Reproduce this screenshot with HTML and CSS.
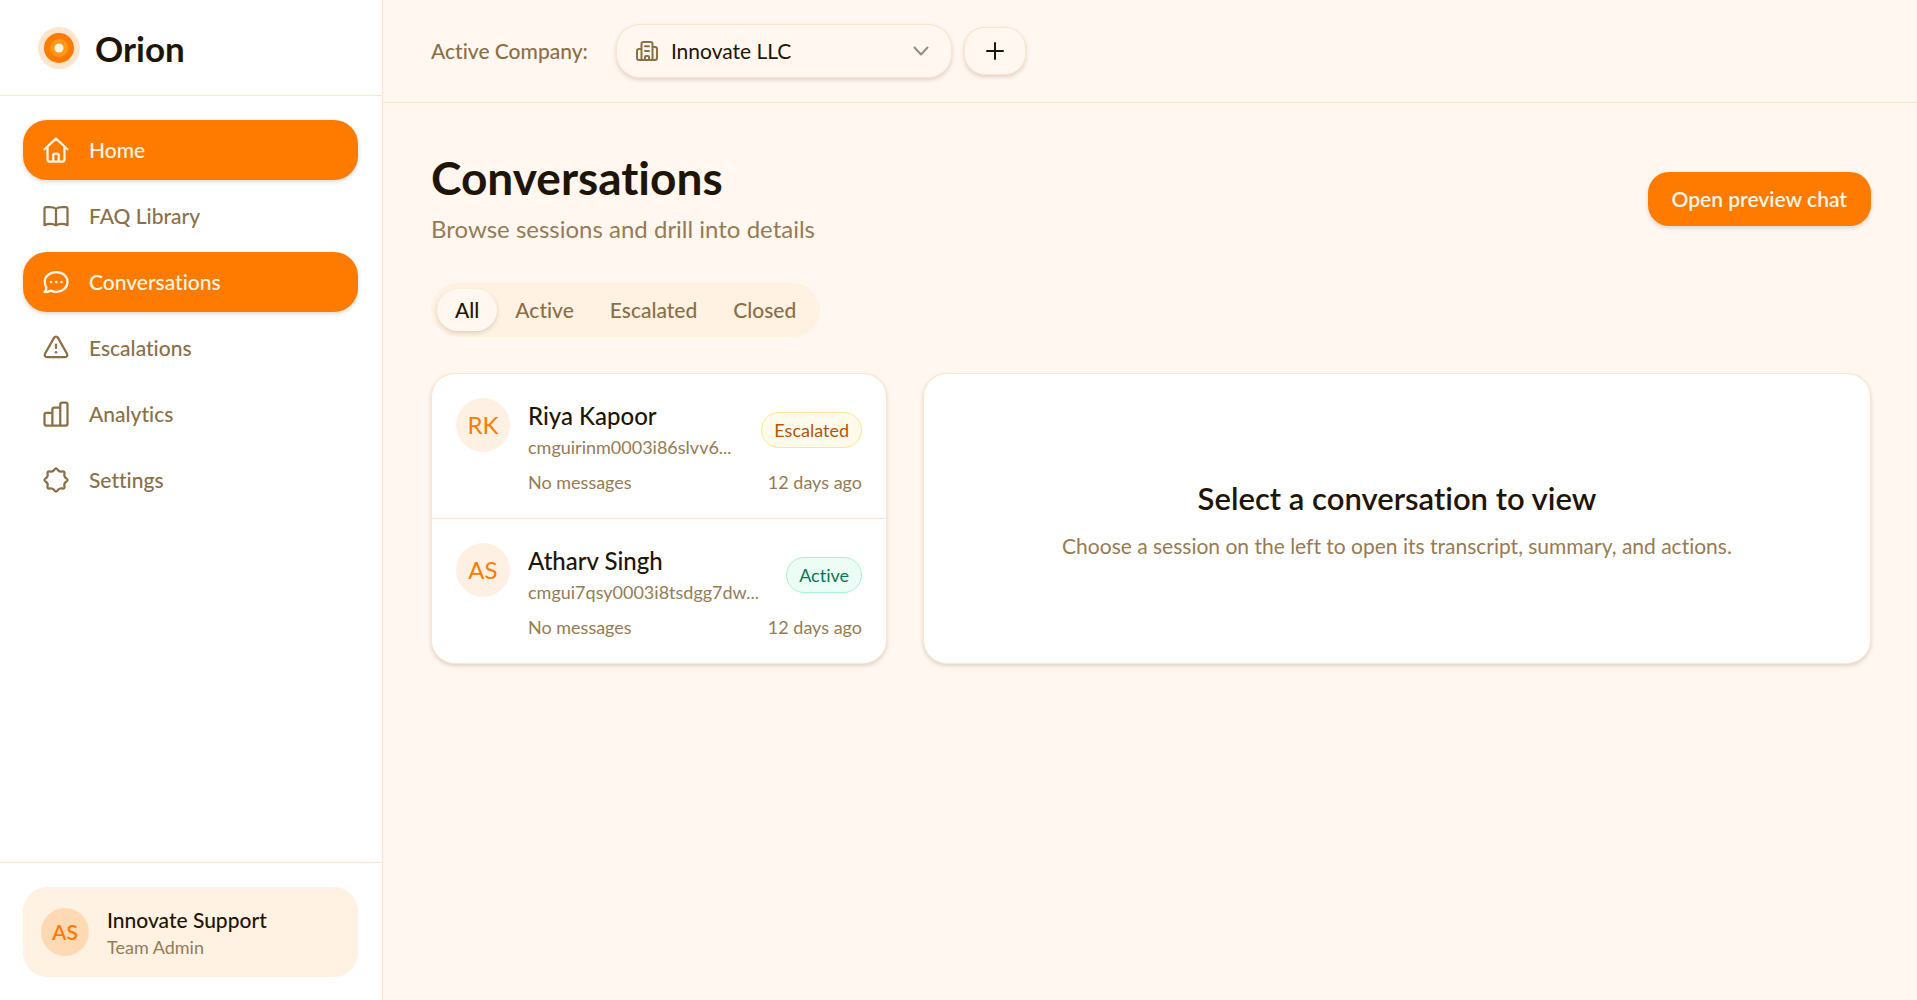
FILE: index.html
```html
<!DOCTYPE html>
<html lang="en">
<head>
<meta charset="utf-8">
<meta name="viewport" content="width=device-width, initial-scale=1">
<title>Orion – Conversations</title>
<link rel="stylesheet" href="styles.css">
</head>
<body>
<div class="app">
  <aside class="sidebar">
    <div class="brand">
      <svg class="brand-mark" viewBox="0 0 48 48" aria-hidden="true">
        <circle cx="24" cy="24" r="21" fill="#ffe5cc"/>
        <circle cx="24" cy="24" r="15" fill="#ff7b00"/>
        <circle cx="24" cy="24" r="9" fill="#ff9a17"/>
        <circle cx="24" cy="24" r="4.5" fill="#fff2e0"/>
      </svg>
      <span class="brand-name">Orion</span>
    </div>
    <nav class="nav" aria-label="Main">
      <a class="nav-link is-active" href="#home">
        <svg class="icon" viewBox="0 0 24 24" aria-hidden="true"><path d="M2.8 11.4 12 2.9l9.200 8.500M5.200 9.300V19.800A1.400 1.400 0 0 0 6.600 21.200H17.400A1.400 1.400 0 0 0 18.800 19.800V9.300M9.800 21V16A1.200 1.200 0 0 1 11 14.800H13A1.200 1.200 0 0 1 14.200 16V21"/></svg>
        Home
      </a>
      <a class="nav-link" href="#faq">
        <svg class="icon" viewBox="0 0 24 24" aria-hidden="true"><path d="M12 6.200C10.500 4.900 8.800 4.800 7 4.800H4.200A1.400 1.400 0 0 0 2.800 6.200V19.300C5.500 18.200 9.500 18.100 12 19.400 14.500 18.100 18.500 18.200 21.200 19.300V6.200A1.400 1.400 0 0 0 19.800 4.800H17C15.200 4.800 13.500 4.900 12 6.200ZM12 6.200V19.400"/></svg>
        FAQ Library
      </a>
      <a class="nav-link is-active" href="#conversations" aria-current="page">
        <svg class="icon" viewBox="0 0 24 24" aria-hidden="true"><path d="M12.200 4C7 4 3 7.400 3 11.900C3 13.600 3.500 15.100 4.300 16.300C4.500 17.700 3.900 18.900 2.800 20C4.700 20.100 6.400 19.600 7.800 18.900C9.100 19.500 10.600 19.800 12.200 19.800C17.400 19.800 21.200 16.400 21.200 11.900S17.400 4 12.200 4Z"/><path class="dots" d="M8 11.900h.01M12.200 11.900h.01M16.400 11.900h.01"/></svg>
        Conversations
      </a>
      <a class="nav-link" href="#escalations">
        <svg class="icon" viewBox="0 0 24 24" aria-hidden="true"><path d="M10.500 3.700 3.200 16.600C2.500 17.800 3.300 19.300 4.700 19.300H19.300C20.700 19.300 21.500 17.800 20.800 16.600L13.500 3.700C12.800 2.600 11.200 2.600 10.500 3.700ZM12 9.200V12"/><path class="dots" d="M12 15.400h.01"/></svg>
        Escalations
      </a>
      <a class="nav-link" href="#analytics">
        <svg class="icon" viewBox="0 0 24 24" aria-hidden="true"><path d="M9.100 21.200H4.300A1.500 1.500 0 0 1 2.800 19.700V12.600A1.500 1.500 0 0 1 4.300 11.100H9.100ZM9.100 21.200H15.400V6.900H10.600A1.500 1.500 0 0 0 9.100 8.400ZM15.400 21.200H19.700A1.500 1.500 0 0 0 21.200 19.700V4.300A1.500 1.500 0 0 0 19.700 2.800H16.900A1.500 1.500 0 0 0 15.400 4.300Z"/></svg>
        Analytics
      </a>
      <a class="nav-link" href="#settings">
        <svg class="icon" viewBox="0 0 24 24" aria-hidden="true"><path d="M10.720 3.760Q12 1.700 13.280 3.760T16.920 5.270Q19.280 4.720 18.730 7.080T20.240 10.720Q22.300 12 20.240 13.280T18.730 16.920Q19.280 19.280 16.920 18.730T13.280 20.240Q12 22.300 10.720 20.240T7.080 18.730Q4.720 19.280 5.270 16.920T3.760 13.280Q1.700 12 3.760 10.720T5.270 7.080Q4.720 4.720 7.080 5.270T10.720 3.760Z"/></svg>
        Settings
      </a>
    </nav>
    <div class="account">
      <div class="account-card">
        <span class="account-avatar" aria-hidden="true">AS</span>
        <div>
          <div class="account-name">Innovate Support</div>
          <div class="account-role">Team Admin</div>
        </div>
      </div>
    </div>
  </aside>

  <div class="page">
    <header class="topbar">
      <label class="topbar-label" for="company">Active Company:</label>
      <div class="topbar-controls">
        <div class="company">
          <svg class="company-icon" viewBox="0 0 24 24" aria-hidden="true"><path d="M6.500 21V5A2 2 0 0 1 8.500 3H15.500A2 2 0 0 1 17.500 5V21M6.500 10H4A2 2 0 0 0 2 12V19A2 2 0 0 0 4 21H20A2 2 0 0 0 22 19V10A2 2 0 0 0 20 8H17.500M10 7.200H14M10 12H14M10 21V18A1 1 0 0 1 11 17H13A1 1 0 0 1 14 18V21"/></svg>
          <select class="company-select" id="company"><option>Innovate LLC</option></select>
          <svg class="company-chevron" viewBox="0 0 24 24" aria-hidden="true"><path d="M5.500 8.500 12 15.500 18.500 8.500"/></svg>
        </div>
        <button class="add" type="button" aria-label="Add company">
          <svg class="add-icon" viewBox="0 0 24 24" aria-hidden="true"><path d="M12 4V20M4 12H20"/></svg>
        </button>
      </div>
    </header>

    <main class="main">
      <div class="heading">
        <div class="heading-text">
          <h1 class="title">Conversations</h1>
          <p class="subtitle">Browse sessions and drill into details</p>
        </div>
        <button class="primary" type="button">Open preview chat</button>
      </div>

      <div class="tabs" role="tablist" aria-label="Status">
        <button class="tab is-selected" type="button" role="tab" aria-selected="true">All</button>
        <button class="tab" type="button" role="tab" aria-selected="false">Active</button>
        <button class="tab" type="button" role="tab" aria-selected="false">Escalated</button>
        <button class="tab" type="button" role="tab" aria-selected="false">Closed</button>
      </div>

      <div class="columns">
        <ul class="card sessions">
          <li class="session">
            <span class="session-avatar" aria-hidden="true">RK</span>
            <div class="session-body">
              <div class="session-head">
                <div class="session-who">
                  <div class="session-name">Riya Kapoor</div>
                  <div class="session-id">cmguirinm0003i86slvv6...</div>
                </div>
                <span class="badge badge-escalated">Escalated</span>
              </div>
              <div class="session-meta"><span>No messages</span><span>12 days ago</span></div>
            </div>
          </li>
          <li class="session">
            <span class="session-avatar" aria-hidden="true">AS</span>
            <div class="session-body">
              <div class="session-head">
                <div class="session-who">
                  <div class="session-name">Atharv Singh</div>
                  <div class="session-id">cmgui7qsy0003i8tsdgg7dw...</div>
                </div>
                <span class="badge badge-active">Active</span>
              </div>
              <div class="session-meta"><span>No messages</span><span>12 days ago</span></div>
            </div>
          </li>
        </ul>
        <section class="card empty">
          <h2 class="empty-title">Select a conversation to view</h2>
          <p class="empty-text">Choose a session on the left to open its transcript, summary, and actions.</p>
        </section>
      </div>
    </main>
  </div>
</div>
</body>
</html>
```
FILE: styles.css
```css
:root {
  --bg: #fff7f0;
  --surface: #ffffff;
  --soft: #fff2e2;
  --line: #ffe4cc;
  --text: #1e1507;
  --muted: #8b6f47;
  --muted-light: #967b55;
  --primary: #ff7b00;
  --on-primary: #fff5e6;
  --shadow: 0 2px 4px rgba(60, 30, 0, 0.16);
}

*, *::before, *::after { box-sizing: border-box; }

body {
  margin: 0;
  background: var(--bg);
  color: var(--text);
  font: 400 21px/30px "Lato", "Liberation Sans", sans-serif;
  font-variant-ligatures: none;
}

h1, h2, p, ul { margin: 0; padding: 0; }
ul { list-style: none; }
button, select {
  font: inherit;
  font-variant-ligatures: none;
  color: inherit;
  cursor: pointer;
}

svg {
  flex: none;
  fill: none;
  stroke: currentColor;
  stroke-width: 1.8;
  stroke-linecap: round;
  stroke-linejoin: round;
}
.dots { stroke-width: 2; }

.app { display: flex; min-height: 100vh; }

/* Sidebar */
.sidebar {
  display: flex;
  flex-direction: column;
  flex: none;
  width: 383px;
  background: var(--surface);
  border-right: 1px solid var(--line);
}
.brand {
  display: flex;
  align-items: center;
  gap: 12px;
  padding: 24px 24px 23px 35px;
  border-bottom: 1px solid var(--line);
}
.brand-mark { width: 48px; height: 48px; stroke: none; }
.brand-name { font-size: 35px; line-height: 48px; font-weight: 700; }

.nav {
  display: flex;
  flex-direction: column;
  flex: 1;
  gap: 6px;
  padding: 24px 24px 24px 23px;
}
.nav-link {
  display: flex;
  align-items: center;
  gap: 18px;
  padding: 15px 18px;
  border-radius: 24px;
  color: var(--muted);
  font-weight: 500;
  text-decoration: none;
}
.nav-link.is-active {
  background: var(--primary);
  color: var(--on-primary);
  box-shadow: var(--shadow);
}
.icon { width: 30px; height: 30px; }

.account { padding: 24px 24px 23px 23px; border-top: 1px solid var(--line); }
.account-card {
  display: flex;
  align-items: center;
  gap: 18px;
  padding: 18px;
  border-radius: 24px;
  background: var(--soft);
}
.account-avatar {
  display: grid;
  place-items: center;
  width: 48px;
  height: 48px;
  border-radius: 50%;
  background: #ffd9b3;
  color: var(--primary);
  font-weight: 600;
}
.account-name { font-weight: 500; }
.account-role { color: var(--muted-light); font-size: 18px; line-height: 24px; }

/* Top bar */
.page { flex: 1; min-width: 0; }
.topbar {
  display: flex;
  align-items: center;
  gap: 28px;
  padding: 24px 46px 24px 48px;
  border-bottom: 1px solid var(--line);
}
.topbar-label { color: var(--muted); font-weight: 500; }
.topbar-controls { display: flex; align-items: center; gap: 12px; }
.company {
  display: grid;
  grid-template-columns: 336px;
  align-items: center;
}
.company > * { grid-area: 1 / 1; }
.company-select {
  appearance: none;
  height: 54px;
  padding: 0 54px;
  border: 1px solid var(--line);
  border-radius: 24px;
  background: var(--bg);
  box-shadow: var(--shadow);
}
.company-icon, .company-chevron {
  z-index: 1;
  width: 24px;
  height: 24px;
  margin: 0 19px;
  pointer-events: none;
}
.company-icon { color: var(--muted); stroke-width: 2; }
.company-chevron { justify-self: end; color: #958b80; stroke-width: 2; }
.add {
  display: grid;
  place-items: center;
  width: 62px;
  height: 48px;
  padding: 0;
  border: 1px solid var(--line);
  border-radius: 21px;
  background: var(--bg);
  box-shadow: var(--shadow);
}
.add-icon { width: 24px; height: 24px; stroke-width: 2; }

/* Content */
.main {
  display: flex;
  flex-direction: column;
  gap: 36px;
  padding: 48px 46px 48px 48px;
}
.heading {
  display: flex;
  align-items: center;
  justify-content: space-between;
  gap: 24px;
}
.heading-text { display: flex; flex-direction: column; gap: 6px; }
.title { font-size: 46px; line-height: 54px; font-weight: 700; }
.subtitle { color: var(--muted-light); font-size: 24px; line-height: 36px; }
.primary {
  height: 54px;
  padding: 0 24px;
  border: 0;
  border-radius: 21px;
  background: var(--primary);
  box-shadow: var(--shadow);
  color: var(--on-primary);
  font-weight: 600;
}

.tabs {
  display: flex;
  align-self: flex-start;
  padding: 6px;
  border-radius: 27px;
  background: var(--soft);
}
.tab {
  height: 42px;
  padding: 0 18px;
  border: 0;
  border-radius: 21px;
  background: none;
  color: var(--muted);
  font-weight: 500;
}
.tab.is-selected {
  background: var(--bg);
  box-shadow: var(--shadow);
  color: var(--text);
}

.columns { display: grid; grid-template-columns: repeat(12, 1fr); gap: 36px; }
.card {
  border: 1px solid var(--line);
  border-radius: 24px;
  background: var(--surface);
  box-shadow: var(--shadow);
}

.sessions { grid-column: span 4; }
.session { display: flex; gap: 18px; padding: 24px; }
.session + .session { border-top: 1px solid var(--line); }
.session-avatar {
  display: grid;
  place-items: center;
  flex: none;
  width: 54px;
  height: 54px;
  border-radius: 50%;
  background: #fff0e4;
  color: var(--primary);
  font-size: 24px;
}
.session-body { flex: 1; min-width: 0; }
.session-head {
  display: flex;
  align-items: center;
  justify-content: space-between;
  gap: 18px;
  margin-bottom: 9px;
}
.session-who { min-width: 0; white-space: nowrap; }
.session-name { font-size: 24px; line-height: 36px; font-weight: 500; }
.session-id { color: var(--muted-light); font-size: 18px; line-height: 27px; }
.session-meta {
  display: flex;
  justify-content: space-between;
  color: var(--muted-light);
  font-size: 18px;
  line-height: 24px;
}
.badge {
  padding: 5px 12px;
  border: 1px solid;
  border-radius: 18px;
  font-size: 18px;
  line-height: 24px;
}
.badge-escalated { background: #fffbeb; border-color: #fde68a; color: #b45309; }
.badge-active { background: #ecfdf5; border-color: #a7f3d0; color: #047857; }

.empty {
  display: flex;
  flex-direction: column;
  grid-column: span 8;
  align-items: center;
  justify-content: center;
  gap: 12px;
  padding: 24px;
  text-align: center;
}
.empty-title { font-size: 31px; line-height: 42px; font-weight: 600; }
.empty-text { color: var(--muted-light); }
```
